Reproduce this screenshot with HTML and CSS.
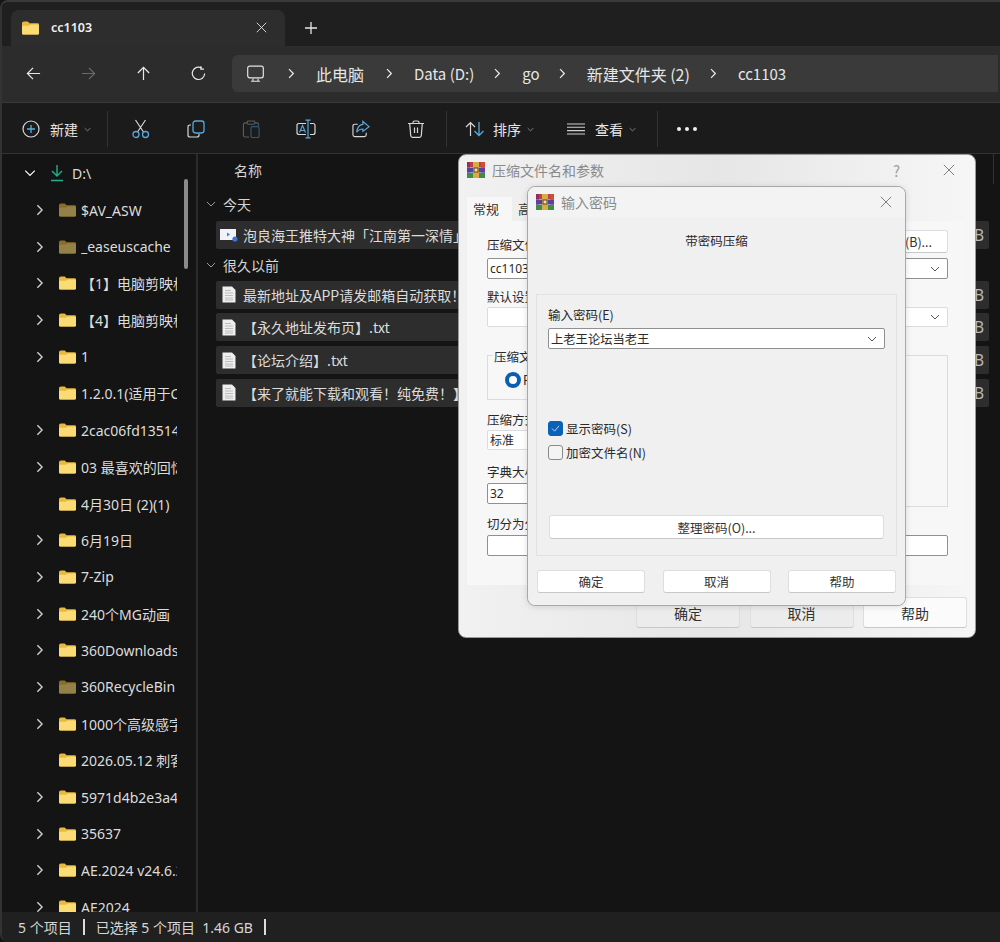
FILE: index.html
```html
<!DOCTYPE html>
<html lang="zh-CN">
<head>
<meta charset="utf-8">
<title>cc1103</title>
<link rel="stylesheet" href="styles.css">
</head>
<body>
<svg class="defs" width="0" height="0" aria-hidden="true">
  <defs>
    <symbol id="folder" viewBox="0 0 18 14">
      <path d="M0 2 Q0 0 2 0 H6 L8 2 H16.5 Q18 2 18 3.5 V12.5 Q18 14 16.5 14 H1.5 Q0 14 0 12.5Z" fill="#e9b93f"/>
      <path d="M0 4.5 H7.5 L9 3.2 H16.5 Q18 3.2 18 4.7 V12.5 Q18 14 16.5 14 H1.5 Q0 14 0 12.5Z" fill="#fbdb74"/>
    </symbol>
    <symbol id="chev" viewBox="0 0 10 14">
      <path d="M2.5 1.5 L8 7 L2.5 12.5" fill="none" stroke="currentColor" stroke-width="1.6"/>
    </symbol>
    <symbol id="doc" viewBox="0 0 14 17">
      <path d="M.5 .5 H10 L13.5 4 V16.5 H.5Z" fill="#eeeeee"/>
      <path d="M3 4.5 H9 M3 7 H11 M3 9.5 H11 M3 12 H11 M3 14 H11" stroke="#bcbcbc" stroke-width="1"/>
    </symbol>
    <symbol id="rar" viewBox="0 0 18 16">
      <rect x="0" y="0" width="18" height="5" fill="#b8433f"/>
      <rect x="0" y="0" width="3" height="5" fill="#8e2f62"/>
      <rect x="14" y="0" width="4" height="5" fill="#c9503a"/>
      <rect x="0" y="5.5" width="18" height="5" fill="#3c4fa8"/>
      <rect x="0" y="5.5" width="3" height="5" fill="#6b3a96"/>
      <rect x="14" y="5.5" width="4" height="5" fill="#6b3a96"/>
      <rect x="0" y="11" width="18" height="5" fill="#3d8f3c"/>
      <rect x="6" y="0" width="6" height="16" fill="#d9a94a"/>
      <rect x="7" y="6" width="4" height="4" fill="#f3dfa0" stroke="#6a431c" stroke-width="1"/>
    </symbol>
    <symbol id="down" viewBox="0 0 10 6">
      <path d="M1 1 L5 5 L9 1" fill="none" stroke="currentColor" stroke-width="1"/>
    </symbol>
    <symbol id="x" viewBox="0 0 14 14">
      <path d="M1 1 L13 13 M13 1 L1 13" fill="none" stroke="currentColor" stroke-width="1.1"/>
    </symbol>
  </defs>
</svg>

<div class="app">
  <header class="tabbar">
    <div class="tab">
      <svg class="tab-folder"><use href="#folder"/></svg>
      <span class="tab-title">cc1103</span>
      <svg class="tab-close"><use href="#x"/></svg>
    </div>
    <svg class="tab-add" viewBox="0 0 12 12"><path d="M6 0 V12 M0 6 H12" stroke="#e6e6e6" stroke-width="1.3"/></svg>
  </header>

  <nav class="navbar">
    <div class="nav-buttons">
      <svg class="nav-ico" viewBox="0 0 16 14"><path d="M15 7 H1.5 M7.5 1 L1.5 7 L7.5 13" fill="none" stroke="#e8e8e8" stroke-width="1.3"/></svg>
      <svg class="nav-ico" viewBox="0 0 16 14"><path d="M1 7 H14.5 M8.5 1 L14.5 7 L8.5 13" fill="none" stroke="#6a6a6a" stroke-width="1.3"/></svg>
      <svg class="nav-ico" viewBox="0 0 14 16"><path d="M7 15 V1.5 M1 7.5 L7 1.5 L13 7.5" fill="none" stroke="#e8e8e8" stroke-width="1.3"/></svg>
      <svg class="nav-ico" viewBox="0 0 16 16"><path d="M11.5 2.2 A6.6 6.6 0 1 0 14.6 8" fill="none" stroke="#e8e8e8" stroke-width="1.3"/><path d="M10.5 .3 V3.4 H13.8" fill="none" stroke="#e8e8e8" stroke-width="1.3"/></svg>
    </div>
    <div class="crumbs">
      <svg class="pc-ico" viewBox="0 0 17 17"><rect x=".7" y=".7" width="15.6" height="11.6" rx="2" fill="none" stroke="#e4e4e4" stroke-width="1.2"/><path d="M6 13 V15.5 M11 13 V15.5 M4 15.8 H13" stroke="#e4e4e4" stroke-width="1.1" fill="none"/></svg>
      <svg class="crumb-chev"><use href="#chev"/></svg>
      <span class="crumb zh first">此电脑</span>
      <svg class="crumb-chev"><use href="#chev"/></svg>
      <span class="crumb">Data (D:)</span>
      <svg class="crumb-chev"><use href="#chev"/></svg>
      <span class="crumb go">go</span>
      <svg class="crumb-chev"><use href="#chev"/></svg>
      <span class="crumb zh">新建文件夹 (2)</span>
      <svg class="crumb-chev"><use href="#chev"/></svg>
      <span class="crumb">cc1103</span>
    </div>
  </nav>

  <div class="toolbar">
    <div class="tool new">
      <svg class="tool-ico" viewBox="0 0 18 18"><circle cx="9" cy="9" r="8" fill="none" stroke="#d8d8d8" stroke-width="1.2"/><path d="M9 5 V13 M5 9 H13" stroke="#58b0e8" stroke-width="1.3"/></svg>
      <span>新建</span>
      <svg class="tool-down"><use href="#down"/></svg>
    </div>
    <i class="tool-sep"></i>
    <svg class="act-ico cut" viewBox="0 0 18 19"><path d="M3.5 .5 L11.5 12.5 M13.5 .5 L5.5 12.5" stroke="#d8d8d8" stroke-width="1.2" fill="none"/><circle cx="4" cy="15" r="3" fill="none" stroke="#58a8de" stroke-width="1.3"/><circle cx="13.5" cy="15" r="3" fill="none" stroke="#58a8de" stroke-width="1.3"/></svg>
    <svg class="act-ico copy" viewBox="0 0 18 18"><path d="M4 5 H3 Q1 5 1 7 V15 Q1 17 3 17 H10 Q12 17 12 15 V14" fill="none" stroke="#d8d8d8" stroke-width="1.2"/><rect x="6" y="1" width="11" height="12" rx="2.4" fill="none" stroke="#58a8de" stroke-width="1.3"/></svg>
    <svg class="act-ico paste" viewBox="0 0 18 19"><path d="M5 3 H3 Q1 3 1 5 V16 Q1 18 3 18 H7 M13 3 H15 Q17 3 17 5 V6" fill="none" stroke="#5c5c5c" stroke-width="1.2"/><rect x="5" y="1" width="8" height="3.5" rx="1" fill="none" stroke="#5c5c5c" stroke-width="1.1"/><rect x="9" y="7" width="8.5" height="11.5" rx="1.5" fill="none" stroke="#2f5a78" stroke-width="1.2"/></svg>
    <svg class="act-ico rename" viewBox="0 0 20 19"><path d="M10 4 H3 Q1 4 1 6 V13 Q1 15 3 15 H10 M14 4 H17 Q19 4 19 6 V13 Q19 15 17 15 H14" fill="none" stroke="#d8d8d8" stroke-width="1.2"/><path d="M12 1 V18 M9.5 .7 H14.5 M9.5 18.3 H14.5" stroke="#58a8de" stroke-width="1.2" fill="none"/><path d="M3.5 13 L6.5 6 L9.5 13 M4.5 11 H8.5" stroke="#58a8de" stroke-width="1.1" fill="none"/></svg>
    <svg class="act-ico share" viewBox="0 0 19 18"><path d="M6 4 H3 Q1 4 1 6 V15 Q1 17 3 17 H13 Q15 17 15 15 V13" fill="none" stroke="#d8d8d8" stroke-width="1.2"/><path d="M11.5 1 L18 6.5 L11.5 11.5 V9 Q7 9 5 12.5 Q5.5 5 11.5 4.2Z" fill="none" stroke="#58a8de" stroke-width="1.3"/></svg>
    <svg class="act-ico trash" viewBox="0 0 17 18"><path d="M.5 3.5 H16.5 M5.5 3.5 V2.5 Q5.5 1 7 1 H10 Q11.5 1 11.5 2.5 V3.5 M2.2 3.5 L3.2 15.5 Q3.4 17.3 5 17.3 H12 Q13.6 17.3 13.8 15.5 L14.8 3.5 M7 7.5 V13 M10 7.5 V13" fill="none" stroke="#d8d8d8" stroke-width="1.2"/></svg>
    <i class="tool-sep"></i>
    <div class="tool sort">
      <svg class="tool-ico" viewBox="0 0 20 16"><path d="M5.5 15 V1.5 M1 6 L5.5 1.5 L10 6" fill="none" stroke="#d8d8d8" stroke-width="1.2"/><path d="M14 1 V14.5 M9.5 10 L14 14.5 L18.5 10" fill="none" stroke="#58a8de" stroke-width="1.3"/></svg>
      <span>排序</span>
      <svg class="tool-down"><use href="#down"/></svg>
    </div>
    <div class="tool view">
      <svg class="tool-ico" viewBox="0 0 18 12"><path d="M0 1 H18 M0 4.2 H18 M0 7.6 H18 M0 11 H18" stroke="#d0d0d0" stroke-width="1.1"/></svg>
      <span>查看</span>
      <svg class="tool-down"><use href="#down"/></svg>
    </div>
    <i class="tool-sep"></i>
    <div class="more"><i></i><i></i><i></i></div>
  </div>

  <main class="body">
    <aside class="tree">
      <div class="tree-scroll"></div>
      <div class="tree-row root">
        <svg class="tree-chev root-chev"><use href="#down"/></svg>
        <svg class="drive" viewBox="0 0 14 18"><path d="M7 1 V12 M2 7 L7 12 L12 7 M1 16.5 H13" fill="none" stroke="#21b08a" stroke-width="1.4"/></svg>
        <span class="tree-label">D:\</span>
      </div>
      <div class="tree-row"><svg class="tree-chev"><use href="#chev"/></svg><svg class="tree-folder dim"><use href="#folder"/></svg><span class="tree-label">$AV_ASW</span></div>
      <div class="tree-row"><svg class="tree-chev"><use href="#chev"/></svg><svg class="tree-folder dim"><use href="#folder"/></svg><span class="tree-label">_easeuscache</span></div>
      <div class="tree-row"><svg class="tree-chev"><use href="#chev"/></svg><svg class="tree-folder"><use href="#folder"/></svg><span class="tree-label">【1】电脑剪映格式</span></div>
      <div class="tree-row"><svg class="tree-chev"><use href="#chev"/></svg><svg class="tree-folder"><use href="#folder"/></svg><span class="tree-label">【4】电脑剪映格式</span></div>
      <div class="tree-row"><svg class="tree-chev"><use href="#chev"/></svg><svg class="tree-folder"><use href="#folder"/></svg><span class="tree-label">1</span></div>
      <div class="tree-row leaf"><svg class="tree-folder"><use href="#folder"/></svg><span class="tree-label">1.2.0.1(适用于Caps</span></div>
      <div class="tree-row"><svg class="tree-chev"><use href="#chev"/></svg><svg class="tree-folder"><use href="#folder"/></svg><span class="tree-label">2cac06fd13514e</span></div>
      <div class="tree-row"><svg class="tree-chev"><use href="#chev"/></svg><svg class="tree-folder"><use href="#folder"/></svg><span class="tree-label">03 最喜欢的回忆录</span></div>
      <div class="tree-row leaf"><svg class="tree-folder"><use href="#folder"/></svg><span class="tree-label">4月30日 (2)(1)</span></div>
      <div class="tree-row"><svg class="tree-chev"><use href="#chev"/></svg><svg class="tree-folder"><use href="#folder"/></svg><span class="tree-label">6月19日</span></div>
      <div class="tree-row"><svg class="tree-chev"><use href="#chev"/></svg><svg class="tree-folder"><use href="#folder"/></svg><span class="tree-label">7-Zip</span></div>
      <div class="tree-row"><svg class="tree-chev"><use href="#chev"/></svg><svg class="tree-folder"><use href="#folder"/></svg><span class="tree-label">240个MG动画</span></div>
      <div class="tree-row"><svg class="tree-chev"><use href="#chev"/></svg><svg class="tree-folder"><use href="#folder"/></svg><span class="tree-label">360Downloads</span></div>
      <div class="tree-row"><svg class="tree-chev"><use href="#chev"/></svg><svg class="tree-folder dim"><use href="#folder"/></svg><span class="tree-label">360RecycleBin</span></div>
      <div class="tree-row"><svg class="tree-chev"><use href="#chev"/></svg><svg class="tree-folder"><use href="#folder"/></svg><span class="tree-label">1000个高级感字幕</span></div>
      <div class="tree-row leaf"><svg class="tree-folder"><use href="#folder"/></svg><span class="tree-label">2026.05.12 刺客信条</span></div>
      <div class="tree-row"><svg class="tree-chev"><use href="#chev"/></svg><svg class="tree-folder"><use href="#folder"/></svg><span class="tree-label">5971d4b2e3a4c</span></div>
      <div class="tree-row"><svg class="tree-chev"><use href="#chev"/></svg><svg class="tree-folder"><use href="#folder"/></svg><span class="tree-label">35637</span></div>
      <div class="tree-row"><svg class="tree-chev"><use href="#chev"/></svg><svg class="tree-folder"><use href="#folder"/></svg><span class="tree-label">AE.2024 v24.6.2</span></div>
      <div class="tree-row"><svg class="tree-chev"><use href="#chev"/></svg><svg class="tree-folder"><use href="#folder"/></svg><span class="tree-label">AE2024</span></div>
    </aside>

    <section class="files">
      <div class="col-head"><span>名称</span><i class="col-div"></i></div>
      <div class="group"><svg class="group-chev"><use href="#down"/></svg><span>今天</span></div>
      <div class="file">
        <svg class="file-ico" viewBox="0 0 18 14"><rect x="0" y="1" width="16" height="11" fill="#f1f3fa"/><path d="M7 4.5 L10 6.5 L7 8.5Z" fill="#4c78d8"/><circle cx="15" cy="11" r="2.6" fill="#3f74d8"/></svg>
        <span class="file-name">泡良海王推特大神「江南第一深情」</span><span class="file-size">B</span>
      </div>
      <div class="group second"><svg class="group-chev"><use href="#down"/></svg><span>很久以前</span></div>
      <div class="file"><svg class="file-doc"><use href="#doc"/></svg><span class="file-name">最新地址及APP请发邮箱自动获取！.txt</span><span class="file-size">B</span></div>
      <div class="file"><svg class="file-doc"><use href="#doc"/></svg><span class="file-name">【永久地址发布页】.txt</span><span class="file-size">B</span></div>
      <div class="file"><svg class="file-doc"><use href="#doc"/></svg><span class="file-name">【论坛介绍】.txt</span><span class="file-size">B</span></div>
      <div class="file"><svg class="file-doc"><use href="#doc"/></svg><span class="file-name">【来了就能下载和观看！纯免费！】.txt</span><span class="file-size">B</span></div>
    </section>
  </main>

  <footer class="status">
    <span>5 个项目</span><i class="status-sep"></i><span>已选择 5 个项目&nbsp;&nbsp;1.46 GB</span><i class="status-sep"></i>
  </footer>

  <div class="dialog back">
    <div class="dlg-title">
      <svg class="rar"><use href="#rar"/></svg>
      <span class="dlg-caption">压缩文件名和参数</span>
      <span class="dlg-help">?</span>
      <svg class="dlg-close"><use href="#x"/></svg>
    </div>
    <div class="tabs"><span class="d-tab on">常规</span><span class="d-tab">高级</span></div>
    <div class="panel">
      <div class="field">
        <div class="name-head"><span class="name-label">压缩文件名(A)</span><span class="btn browse">浏览(B)...</span></div>
        <div class="input combo"><span>cc1103.rar</span><svg class="combo-down"><use href="#down"/></svg></div>
      </div>
      <div class="field profile">
        <span class="f-label">默认设置</span>
        <div class="input flat combo"><span></span><svg class="combo-down"><use href="#down"/></svg></div>
      </div>
      <div class="columns">
        <div class="col-left">
          <div class="fmt"><span class="legend">压缩文件格式</span><div class="radio-row"><i class="radio"></i><span>RAR</span></div></div>
          <div class="field method"><span class="f-label">压缩方式(C)</span><div class="input flat"><span>标准</span></div></div>
          <div class="field dict"><span class="f-label">字典大小(I)</span><div class="input"><span>32</span></div></div>
        </div>
        <div class="opts"></div>
      </div>
      <div class="field split"><span class="f-label">切分为分卷(V)</span><div class="input"><span></span></div></div>
    </div>
    <div class="dlg-actions">
      <span class="btn large">确定</span><span class="btn large">取消</span><span class="btn large light">帮助</span>
    </div>
  </div>

  <div class="dialog front">
    <div class="dlg-title small">
      <svg class="rar"><use href="#rar"/></svg>
      <span class="dlg-caption">输入密码</span>
      <svg class="dlg-close"><use href="#x"/></svg>
    </div>
    <div class="front-body">
      <p class="front-note">带密码压缩</p>
      <div class="pw-group">
        <label class="pw-label">输入密码(E)</label>
        <div class="input combo pw"><span>上老王论坛当老王</span><svg class="combo-down"><use href="#down"/></svg></div>
        <div class="check-row first"><i class="check on"><svg viewBox="0 0 10 8"><path d="M1 4 L4 7 L9 1" fill="none" stroke="#cfe4f7" stroke-width="1"/></svg></i><span>显示密码(S)</span></div>
        <div class="check-row"><i class="check"></i><span>加密文件名(N)</span></div>
        <span class="btn organize">整理密码(O)...</span>
      </div>
      <div class="front-actions"><span class="btn">确定</span><span class="btn">取消</span><span class="btn">帮助</span></div>
    </div>
  </div>
</div>
</body>
</html>
```

FILE: styles.css
```css
* { box-sizing: border-box; }
html, body { margin: 0; height: 100%; background: #141414; }
body {
  font-family: "Noto Sans CJK SC", "Noto Sans", sans-serif;
  font-size: 14px;
  color: #e6e6e6;
  overflow: hidden;
}
.defs { position: absolute; }
i { display: block; }

.app {
  position: relative;
  width: 1000px;
  height: 942px;
  display: flex;
  flex-direction: column;
  background: #191919;
  border-left: 2px solid #333;
  border-top: 2px solid #3a3a3a;
  border-radius: 8px 0 0 8px;
  overflow: hidden;
}

/* tab strip */
.tabbar {
  height: 44px;
  background: #1f1f1f;
  display: flex;
  align-items: flex-end;
  padding-left: 9px;
  flex: none;
}
.tab {
  width: 274px;
  height: 36px;
  background: #2d2d2d;
  border-radius: 8px 8px 0 0;
  display: flex;
  align-items: center;
  padding: 0 17px 1px 11px;
}
.tab-folder { width: 17px; height: 14px; margin-right: 12px; }
.tab-title { flex: 1; font-family: "Noto Sans", sans-serif; font-size: 12.5px; font-weight: 600; color: #f0f0f0; }
.tab-close { width: 11px; height: 11px; color: #e8e8e8; margin-right: 1px; }
.tab-add { width: 12px; height: 12px; margin: 0 0 12px 20px; }

/* navigation */
.navbar {
  height: 56px;
  background: #2c2c2c;
  display: flex;
  align-items: center;
  padding: 0 0 1px 24px;
  flex: none;
}
.nav-buttons { display: flex; align-items: center; width: 206px; flex: none; }
.nav-ico { width: 15px; height: 15px; margin-right: 40px; flex: none; }
.crumbs {
  width: 766px;
  height: 37px;
  background: #3a3a3a;
  border-radius: 6px 0 0 6px;
  display: flex;
  align-items: center;
  padding-left: 15px;
  font-size: 15px;
  color: #e6e6e6;
  white-space: nowrap;
  flex: none;
}
.pc-ico { width: 17px; height: 18px; margin-right: 23px; }
.crumb-chev { width: 8px; height: 11px; color: #e8e8e8; margin-right: 21px; flex: none; }
.crumb { margin-right: 19px; }
.crumb.zh { font-size: 16px; }
.crumb.first { margin-right: 21px; }
.crumb.go { margin-right: 18px; }

/* command bar */
.toolbar {
  height: 52px;
  background: #1b1b1b;
  border-top: 1px solid #3a3a3a;
  border-bottom: 1px solid #333;
  display: flex;
  align-items: center;
  padding: 2px 0 0 20px;
  flex: none;
  font-size: 14px;
}
.tool { display: flex; align-items: center; }
.tool-ico { width: 18px; height: 18px; margin-right: 12px; }
.tool-down { width: 7px; height: 5px; color: #aaa; margin-left: 6px; }
.tool-sep { width: 1px; height: 36px; background: #333; }
.new { margin-right: 16px; }
.new .tool-ico { margin-right: 10px; }
.act-ico { width: 18px; height: 18px; margin-left: 37px; flex: none; }
.cut { margin-left: 24px; height: 20px; }
.copy { margin-left: 37px; }
.rename { width: 20px; height: 20px; margin-left: 36px; }
.share { margin-left: 36px; }
.trash { margin-right: 21px; }
.sort { margin-left: 18px; }
.sort .tool-ico { width: 20px; height: 16px; margin-right: 8px; }
.view { margin: 0 21px 0 33px; }
.view .tool-ico { height: 12px; margin-right: 10px; }
.more { display: flex; gap: 4px; margin-left: 19px; }
.more i { width: 4px; height: 4px; border-radius: 50%; background: #f0f0f0; }

/* content */
.body { flex: 1; min-height: 0; display: flex; background: #141414; }
.tree {
  position: relative;
  width: 196px;
  flex: none;
  border-right: 2px solid #2b2b2b;
  overflow: hidden;
  padding-top: 1px;
}
.tree-scroll {
  position: absolute;
  left: 182px;
  top: 25px;
  width: 4px;
  height: 90px;
  border-radius: 2px;
  background: #8a8a8a;
}
.tree-row {
  height: 36.7px;
  display: flex;
  align-items: center;
  padding-left: 33px;
  white-space: nowrap;
  font-size: 14px;
  color: #dcdcdc;
}
.tree-row.leaf { padding-left: 57px; }
.tree-chev { width: 9px; height: 12px; color: #d0d0d0; margin-right: 15px; flex: none; }
.root { padding-left: 22px; }
.root-chev { width: 12px; height: 8px; color: #fff; margin-right: 14px; }
.drive { width: 14px; height: 18px; margin-right: 8px; flex: none; }
.tree-folder { width: 17px; height: 14px; margin-right: 5px; flex: none; }
.tree-folder.dim { opacity: .55; }
.tree-label {
  width: 96px;
  overflow: hidden;
  font-family: "Noto Sans", "Noto Sans CJK SC", sans-serif;
}

.files { flex: 1; min-width: 0; padding-left: 16px; }
.col-head {
  width: 780px;
  height: 36px;
  display: flex;
  justify-content: space-between;
  align-items: flex-start;
  padding-left: 20px;
  font-size: 14px;
  color: #d6d6d6;
}
.col-head span { padding-top: 6px; }
.col-div { width: 1px; height: 30px; background: #333; }
.group {
  height: 27px;
  margin: 0 0 4px -8px;
  display: flex;
  align-items: center;
  font-size: 14px;
  color: #d6d6d6;
}
.group.second { height: 23px; }
.group-chev { width: 10px; height: 6px; color: #9a9a9a; margin-right: 7px; }
.file {
  width: 773px;
  height: 28px;
  margin: 0 0 4.7px 2px;
  background: #2d2d2d;
  border-radius: 2px;
  display: flex;
  align-items: center;
  padding: 0 4px;
  font-size: 14px;
  color: #dcdcdc;
  white-space: nowrap;
}
.file-ico { width: 18px; height: 14px; margin-right: 5px; flex: none; }
.file-doc { width: 14px; height: 17px; margin: 0 7px 0 2px; flex: none; }
.file-name { flex: 1; }
.file-size { color: #b8b8b8; font-size: 15.5px; margin-right: 1px; font-family: "Noto Sans", sans-serif; }

.status {
  height: 30px;
  flex: none;
  background: #202020;
  display: flex;
  align-items: center;
  padding-left: 16px;
  font-size: 14px;
  color: #d6d6d6;
  font-family: "Noto Sans", "Noto Sans CJK SC", sans-serif;
}
.status-sep { width: 2px; height: 16px; background: #dcdcdc; margin: 0 11px; }

/* dialogs */
.dialog {
  position: absolute;
  color: #2a2a2a;
  font-size: 12.5px;
  display: flex;
  flex-direction: column;
}
.back {
  left: 456px;
  top: 152px;
  width: 518px;
  height: 484px;
  background: linear-gradient(90deg, #f1f1f1 0%, #e6e6e6 50%, #f6f6f6 100%);
  border: 1px solid #9a9a9a;
  border-radius: 8px;
  padding: 0 8px;
}
.front {
  left: 525px;
  top: 184px;
  width: 379px;
  height: 420px;
  background: #f0f0f0;
  border: 1px solid #a8a8a8;
  border-radius: 8px;
  box-shadow: 0 1px 6px rgba(0,0,0,.12);
}
.dlg-title { height: 30px; display: flex; align-items: center; flex: none; }
.rar { width: 18px; height: 16px; flex: none; margin-right: 7px; }
.dlg-caption { flex: 1; font-size: 14px; color: #8a8a8a; }
.dlg-help { font-size: 15px; color: #a0a0a0; margin-right: 43px; }
.dlg-close { width: 12px; height: 12px; color: #777; margin-right: 12px; flex: none; }
.dlg-title.small { background: #f3f3f3; padding-left: 8px; border-radius: 8px 8px 0 0; }
.dlg-title.small .dlg-close { margin-right: 13px; }

.tabs { display: flex; height: 36px; align-items: flex-end; flex: none; font-size: 13px; }
.d-tab { height: 24px; padding: 2px 6px 0; width: 48px; color: #333; }
.d-tab.on { background: #f7f7f7; width: 45px; }
.panel {
  width: 498px;
  height: 364px;
  flex: none;
  background: #f7f7f7;
  padding: 9px 17px 0 20px;
  display: flex;
  flex-direction: column;
}
.field { display: flex; flex-direction: column; }
.f-label { line-height: 18px; }
.name-head { display: flex; justify-content: space-between; align-items: flex-start; height: 28px; }
.name-label { line-height: 18px; margin-top: 6px; }
.browse { width: 84px; height: 23px; }
.input {
  height: 21px;
  flex: none;
  background: #fff;
  border: 1px solid #909090;
  border-radius: 2px;
  display: flex;
  align-items: center;
  justify-content: space-between;
  padding: 0 7px 0 2px;
  font-size: 12px;
  font-family: "Noto Sans", "Noto Sans CJK SC", sans-serif;
}
.input.flat { border-color: #dcdcdc; height: 20px; }
.combo-down { width: 10px; height: 6px; color: #555; flex: none; }
.profile { margin-top: 9px; }
.profile .input { margin-top: 1px; }
.columns { display: grid; grid-template-columns: 200px 1fr; height: 152px; margin-top: 28px; }
.col-left { display: flex; flex-direction: column; }
.fmt { height: 45px; flex: none; border: 1px solid #dcdcdc; padding: 0 6px; position: relative; }
.legend { position: absolute; top: -9px; left: 5px; background: #f7f7f7; padding: 0 1px; }
.radio-row { display: flex; align-items: center; gap: 2px; margin: 14px 0 0 11px; }
.radio { width: 16px; height: 16px; border-radius: 50%; border: 4px solid #0a5fb4; background: #fff; flex: none; }
.opts { border: 1px solid #dcdcdc; }
.method { margin-top: 11px; }
.method .input { margin-top: 1px; }
.dict { margin-top: 13px; }
.dict .input { margin-top: 2px; }
.split { margin-top: 8px; }
.split .input { margin-top: 2px; }
.btn {
  display: flex;
  align-items: center;
  justify-content: center;
  background: #fff;
  border: 1px solid #dedede;
  border-bottom-color: #c8c8c8;
  border-radius: 3px;
  font-size: 12.5px;
  color: #333;
}
.dlg-actions { display: flex; justify-content: flex-end; gap: 9.5px; margin-top: 12px; width: 500px; }
.large { width: 104px; height: 31px; font-size: 14px; background: #ececec; }
.large.light { background: #fbfbfb; }

.front-body { flex: 1; background: #f0f0f0; padding: 0 8px; border-radius: 0 0 8px 8px; display: flex; flex-direction: column; }
.front-note { margin: 15px 0 0; height: 62px; text-align: center; line-height: 18px; }
.pw-group {
  height: 262px;
  flex: none;
  border: 1px solid #e2e2e2;
  padding: 11px 11px 0;
  display: flex;
  flex-direction: column;
}
.pw-label { line-height: 17px; margin-bottom: 5px; }
.pw { padding-left: 2px; font-family: "Noto Sans CJK SC", sans-serif; font-size: 12.3px; }
.check-row { display: flex; align-items: center; gap: 3px; height: 16px; margin-top: 8px; }
.check-row.first { margin-top: 71px; }
.check { width: 15px; height: 15px; border-radius: 3px; border: 1px solid #8a8a8a; background: #f4f4f4; display: flex; align-items: center; justify-content: center; flex: none; }
.check.on { background: #0a62b8; border-color: #0a62b8; }
.check svg { width: 9px; height: 7px; }
.organize { height: 24px; width: 335px; margin: 55px 0 0 1px; flex: none; }
.front-actions { display: flex; justify-content: space-between; margin: 14px 1px 0; }
.front-actions .btn { width: 108px; height: 23px; }
```
